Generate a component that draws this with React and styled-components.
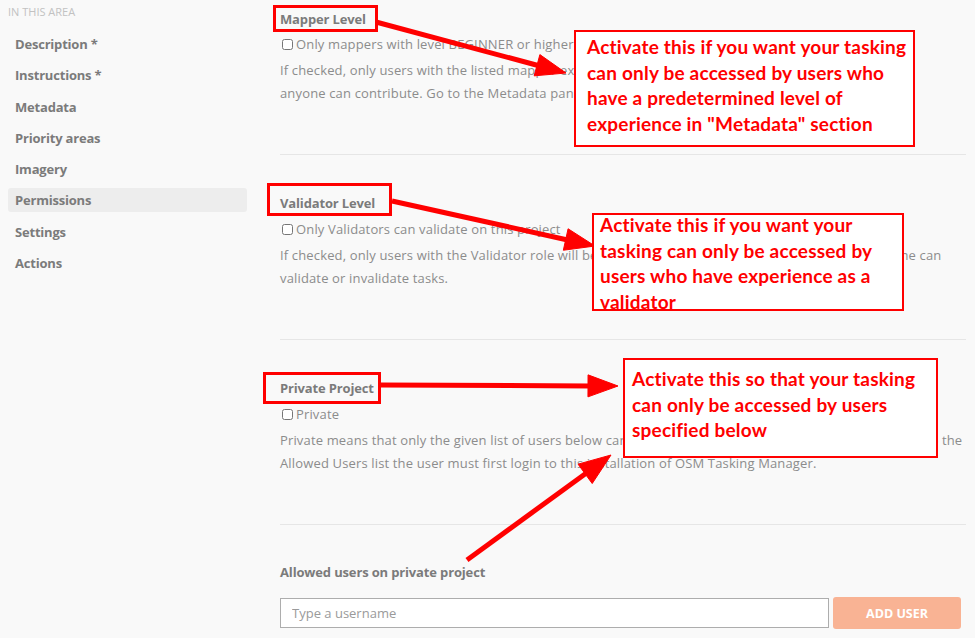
import React from 'react'
import styled, { createGlobalStyle } from 'styled-components'

const GlobalStyle = createGlobalStyle`
  html, body {
    margin: 0;
    padding: 0;
    background: #f9f9f9;
  }
  body {
    font-family: "Open Sans", "Liberation Sans", Arial, sans-serif;
    font-size: 13px;
    color: #8c8c8c;
  }
`

const navItems = [
  'Description *',
  'Instructions *',
  'Metadata',
  'Priority areas',
  'Imagery',
  'Permissions',
  'Settings',
  'Actions',
]

const Page = styled.div`
  position: relative;
  display: flex;
  width: 975px;
  height: 638px;
  overflow: hidden;
  box-sizing: border-box;
  padding: 0 9px 0 8px;
`

const Sidebar = styled.aside`
  width: 239px;
  flex-shrink: 0;
`

const AreaTitle = styled.div`
  font-size: 11px;
  line-height: 14px;
  padding-top: 5px;
  color: #c2c2c2;
  text-transform: uppercase;
`

const NavList = styled.ul`
  list-style: none;
  margin: 13px 0 0;
  padding: 0;
  display: flex;
  flex-direction: column;
  gap: 7.3px;
`

const NavItem = styled.li`
  height: 24px;
  line-height: 24px;
  padding-left: 7px;
  border-radius: 3px;
  font-weight: 700;
  color: #7b7b7b;
  letter-spacing: -0.2px;
  background: ${(p) => (p.active ? '#ededed' : 'transparent')};
`

const Main = styled.main`
  flex: 1;
  margin-left: 33px;
`

const Section = styled.section`
  padding: ${(p) => (p.first ? '9px' : p.last ? '37px' : '38px')} 0 50px;
  border-bottom: ${(p) => (p.last ? 'none' : '1px solid #e6e6e6')};
`

const Heading = styled.h4`
  margin: 0;
  font-size: 13px;
  line-height: 20px;
  font-weight: 700;
  letter-spacing: -0.15px;
  color: #7b7b7b;
`

const CheckRow = styled.label`
  display: flex;
  align-items: center;
  height: 20px;
  margin-top: ${(p) => p.gap || 5}px;
  color: #8c8c8c;
  letter-spacing: 0.15px;
  white-space: nowrap;
  input {
    width: 11px;
    height: 11px;
    margin: 0 3px 0 2px;
  }
`

const Desc = styled.p`
  margin: 5px 0 0;
  line-height: 22.5px;
  letter-spacing: 0.15px;
  white-space: nowrap;
`

const UserLabel = styled(Heading)`
  margin-bottom: 15px;
`

const AddRow = styled.div`
  display: flex;
  gap: 4px;
  align-items: center;
  padding-right: 5px;
`

const UserInput = styled.input`
  flex: 1;
  height: 30px;
  box-sizing: border-box;
  border: 1px solid #adadad;
  background: #fff;
  padding: 0 11px;
  font-family: inherit;
  font-size: 13px;
  &::placeholder {
    color: #9a9a9a;
  }
`

const AddButton = styled.button`
  width: 128px;
  height: 32px;
  border: none;
  border-radius: 3px;
  background: #f9b394;
  color: #fff;
  font-family: inherit;
  font-weight: 700;
  font-size: 12.5px;
  text-transform: uppercase;
`

const Overlay = styled.svg`
  position: absolute;
  left: 0;
  top: 0;
  pointer-events: none;
`

const Mark = styled.div`
  position: absolute;
  box-sizing: border-box;
  border: 3px solid #f00;
`

const Note = styled.div`
  position: absolute;
  box-sizing: border-box;
  background: #fff;
  border: 2px solid #f00;
  color: #f00;
  font-family: Lato, "Open Sans", sans-serif;
  font-weight: 700;
  font-size: 19px;
  line-height: 25.5px;
  letter-spacing: 0.2px;
  white-space: nowrap;
`

const NoteText = styled.div`
  margin-top: ${(p) => p.shift}px;
  margin-left: ${(p) => p.indent}px;
`

const Arrow = ({ x1, y1, x2, y2, head = 30, half = 11 }) => {
  const dx = x2 - x1
  const dy = y2 - y1
  const len = Math.hypot(dx, dy)
  const ux = dx / len
  const uy = dy / len
  const bx = x2 - ux * head
  const by = y2 - uy * head
  const px = -uy * half
  const py = ux * half
  return (
    <g fill="#f00" stroke="#f00">
      <line x1={x1} y1={y1} x2={bx + ux * 2} y2={by + uy * 2} strokeWidth="5" />
      <polygon
        points={`${x2},${y2} ${bx + px},${by + py} ${bx - px},${by - py}`}
        strokeWidth="1"
      />
    </g>
  )
}

const App = () => {
  return (
    <>
      <GlobalStyle />
      <Page>
        <Sidebar>
          <AreaTitle>In this area</AreaTitle>
          <NavList>
            {navItems.map((item) => (
              <NavItem key={item} active={item === 'Permissions'}>
                {item}
              </NavItem>
            ))}
          </NavList>
        </Sidebar>

        <Main>
          <Section first>
            <Heading>Mapper Level</Heading>
            <CheckRow>
              <input type="checkbox" />
              Only mappers with level BEGINNER or higher can map this project
            </CheckRow>
            <Desc>
              If checked, only users with the listed mapper experience level will be able to contribute. If not checked,
              <br />
              anyone can contribute. Go to the Metadata panel to set the mapper level.
            </Desc>
          </Section>

          <Section>
            <Heading>Validator Level</Heading>
            <CheckRow gap={6}>
              <input type="checkbox" />
              Only Validators can validate on this project
            </CheckRow>
            <Desc>
              If checked, only users with the Validator role will be able to validate this project. If not checked, anyone can
              <br />
              validate or invalidate tasks.
            </Desc>
          </Section>

          <Section>
            <Heading>Private Project</Heading>
            <CheckRow gap={6}>
              <input type="checkbox" />
              Private
            </CheckRow>
            <Desc>
              Private means that only the given list of users below can access this project. Before a user can be added to the
              <br />
              Allowed Users list the user must first login to this installation of OSM Tasking Manager.
            </Desc>
          </Section>

          <Section last>
            <UserLabel>Allowed users on private project</UserLabel>
            <AddRow>
              <UserInput placeholder="Type a username" />
              <AddButton>Add user</AddButton>
            </AddRow>
          </Section>
        </Main>

        <Mark style={{ left: 273, top: 5, width: 105, height: 27 }} />
        <Mark style={{ left: 267, top: 183, width: 125, height: 33 }} />
        <Mark style={{ left: 263, top: 372, width: 118, height: 32 }} />

        <Overlay width="975" height="638">
          <Arrow x1={376} y1={22} x2={566} y2={73} />
          <Arrow x1={392} y1={201} x2={595} y2={246} />
          <Arrow x1={380} y1={385} x2={618} y2={386} />
          <Arrow x1={467} y1={560} x2={611} y2={455} head={32} half={12} />
        </Overlay>

        <Note style={{ left: 574, top: 30, width: 341, height: 117 }}>
          <NoteText shift={2} indent={11}>
            Activate this if you want your tasking
            <br />
            can only be accessed by users who
            <br />
            have a predetermined level of
            <br />
            experience in "Metadata" section
          </NoteText>
        </Note>
        <Note style={{ left: 592, top: 213, width: 312, height: 98 }}>
          <NoteText shift={-3} indent={6}>
            Activate this if you want your
            <br />
            tasking can only be accessed by
            <br />
            users who have experience as a
            <br />
            validator
          </NoteText>
        </Note>
        <Note style={{ left: 623, top: 358, width: 315, height: 100 }}>
          <NoteText shift={6} indent={7}>
            Activate this so that your tasking
            <br />
            can only be accessed by users
            <br />
            specified below
          </NoteText>
        </Note>
      </Page>
    </>
  )
}

export default App
